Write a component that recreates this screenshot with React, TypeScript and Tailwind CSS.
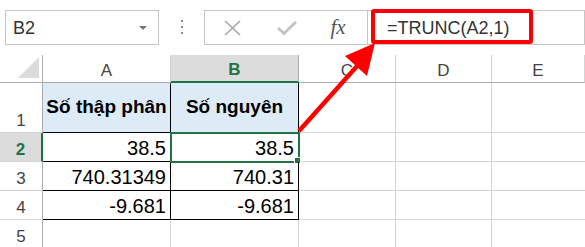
import React from 'react'

const cols = ['A', 'B', 'C', 'D', 'E']

const rows = [
  { n: '2', a: '38.5', b: '38.5' },
  { n: '3', a: '740.31349', b: '740.31' },
  { n: '4', a: '-9.681', b: '-9.681' },
]

export default function App() {
  return (
    <div className="relative h-[247px] w-[585px] overflow-hidden bg-white font-['Liberation_Sans',sans-serif] text-[#444]">
      {/* name box + formula bar */}
      <div className="flex h-[55px] items-start pt-[10px]">
        <div className="ml-[5px] flex h-[35px] w-[154px] items-center justify-between border border-[#c6c6c6] pl-[7px] pr-[11px]">
          <span className="text-[18px] leading-none text-[#333]">B2</span>
          <span className="h-0 w-0 border-x-[4px] border-t-[4px] border-x-transparent border-t-[#777]" />
        </div>
        <div className="ml-[22px] mt-[10px] flex flex-col gap-[4px]">
          <span className="h-[2px] w-[2px] bg-[#8a8a8a]" />
          <span className="h-[2px] w-[2px] bg-[#8a8a8a]" />
          <span className="h-[2px] w-[2px] bg-[#8a8a8a]" />
        </div>
        <div className="ml-[21px] flex h-[35px] flex-1 border border-[#c6c6c6]">
          <div className="flex w-[163px] items-center border-r border-[#c6c6c6]">
            <div className="flex w-[54px] justify-center">
              <svg width="17" height="16" viewBox="0 0 17 16">
                <path d="M1 1 L16 15 M16 1 L1 15" stroke="#a6a6a6" strokeWidth="1.6" fill="none" />
              </svg>
            </div>
            <div className="flex w-[56px] justify-center">
              <svg width="20" height="14" viewBox="0 0 20 14">
                <path d="M1 7 L7 12.5 L19 1" stroke="#c4c4c4" strokeWidth="3" fill="none" />
              </svg>
            </div>
            <div className="flex w-[46px] justify-center">
              <span className="font-['Liberation_Serif',serif] text-[21px] italic leading-none text-[#555]">fx</span>
            </div>
          </div>
          <div className="flex flex-1 items-center pl-[19px]">
            <span className="text-[18px] leading-none text-[#333]">=TRUNC(A2,1)</span>
          </div>
        </div>
      </div>

      {/* sheet */}
      <div className="grid grid-cols-[43px_128px_128px_97px_96px_1fr] grid-rows-[28px_50px_29px_29px_29px_29px]">
        {/* corner */}
        <div className="flex items-end justify-end border-r border-b border-[#ababab] pb-[4px] pr-[3px]">
          <svg width="21" height="21" viewBox="0 0 21 21">
            <polygon points="21,0 21,21 0,21" fill="#dcdcdc" />
          </svg>
        </div>
        {cols.map((c) =>
          c === 'B' ? (
            <div
              key={c}
              className="flex items-center justify-center border-r border-b-2 border-r-[#ababab] border-b-[#217346] bg-[#dcdcdc] pt-[3px] text-[17px] font-bold text-[#217346]"
            >
              {c}
            </div>
          ) : (
            <div
              key={c}
              className="flex items-center justify-center border-r border-b border-r-[#d4d4d4] border-b-[#ababab] pt-[4px] text-[17px]"
            >
              {c}
            </div>
          ),
        )}

        {/* row 1 */}
        <div className="flex items-end justify-center border-r border-b border-r-[#ababab] border-b-[#d4d4d4] pb-[3px] text-[17px] leading-none">
          1
        </div>
        <div className="flex items-center justify-center border-r border-b border-black bg-[#ddebf7] text-[19px] font-bold text-black">
          Số thập phân
        </div>
        <div className="flex items-center justify-center border-r border-b border-black bg-[#ddebf7] text-[19px] font-bold text-black">
          Số nguyên
        </div>
        <div className="border-r border-b border-[#d4d4d4]" />
        <div className="border-r border-b border-[#d4d4d4]" />
        <div className="border-b border-[#d4d4d4]" />

        {rows.map((r) => (
          <React.Fragment key={r.n}>
            {r.n === '2' ? (
              <div className="flex items-end justify-center border-r-2 border-b border-r-[#217346] border-b-[#d4d4d4] bg-[#dcdcdc] pb-[3px] text-[17px] font-bold leading-none text-[#217346]">
                {r.n}
              </div>
            ) : (
              <div className="flex items-end justify-center border-r border-b border-r-[#ababab] border-b-[#d4d4d4] pb-[3px] text-[17px] leading-none">
                {r.n}
              </div>
            )}
            <div className="flex items-end justify-end border-r border-b border-black pb-[3px] pr-[4px] text-[20px] leading-none text-black">
              {r.a}
            </div>
            <div className="relative flex items-end justify-end border-r border-b border-black pb-[3px] pr-[4px] text-[20px] leading-none text-black">
              {r.b}
              {r.n === '2' && (
                <>
                  <div className="absolute -left-[1px] -top-[1px] h-[31px] w-[130px] border-2 border-[#217346]" />
                  <div className="absolute -bottom-[3px] -right-[3px] h-[7px] w-[7px] border border-white bg-[#217346]" />
                </>
              )}
            </div>
            <div className="border-r border-b border-[#d4d4d4]" />
            <div className="border-r border-b border-[#d4d4d4]" />
            <div className="border-b border-[#d4d4d4]" />
          </React.Fragment>
        ))}

        {/* row 5 */}
        <div className="flex items-end justify-center border-r border-b border-r-[#ababab] border-b-[#d4d4d4] pb-[3px] text-[17px] leading-none">
          5
        </div>
        <div className="border-r border-b border-[#d4d4d4]" />
        <div className="border-r border-b border-[#d4d4d4]" />
        <div className="border-r border-b border-[#d4d4d4]" />
        <div className="border-r border-b border-[#d4d4d4]" />
        <div className="border-b border-[#d4d4d4]" />
      </div>

      {/* annotation: red box + arrow */}
      <div className="pointer-events-none absolute left-[371px] top-[9px] h-[35px] w-[162px] rounded-[3px] border-4 border-[#f00]" />
      <svg className="pointer-events-none absolute left-0 top-0" width="585" height="247" viewBox="0 0 585 247">
        <line x1="299" y1="131" x2="358" y2="65" stroke="#f00" strokeWidth="4.5" />
        <polygon points="375,43 345,56 367,76" fill="#f00" />
      </svg>
    </div>
  )
}
